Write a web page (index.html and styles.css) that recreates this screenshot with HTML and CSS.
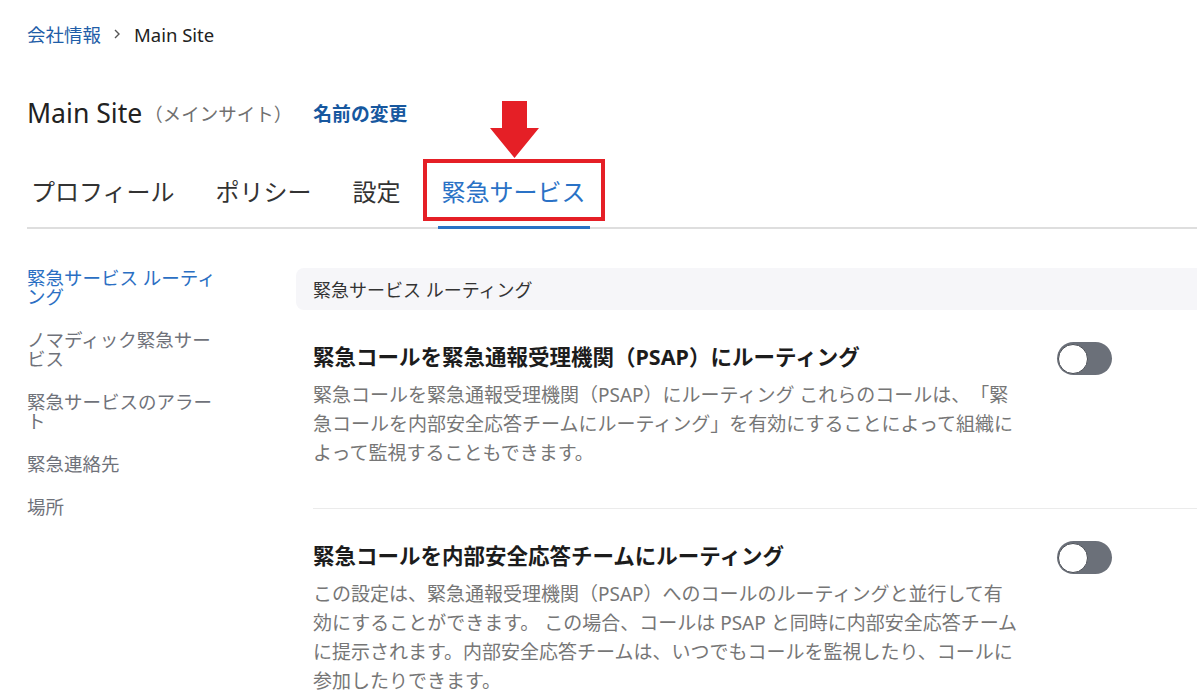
FILE: index.html
```html
<!DOCTYPE html>
<html lang="ja">
<head>
  <meta charset="UTF-8" />
  <meta name="viewport" content="width=device-width, initial-scale=1.0" />
  <title>Main Site - 緊急サービス</title>
  <link rel="stylesheet" href="styles.css">
</head>
<body>
  <div class="page">
    <!-- Breadcrumb -->
    <div class="breadcrumb">
      <a href="#" class="crumb-link">会社情報</a>
      <svg class="crumb-sep" width="8" height="12" viewBox="0 0 8 12"><path d="M2 2 L6 6 L2 10" fill="none" stroke="#555" stroke-width="1.4"/></svg>
      <span class="crumb-current">Main Site</span>
    </div>

    <!-- Title -->
    <div class="site-title">
      <h1>Main Site</h1>
      <span class="site-sub">（メインサイト）</span>
      <a href="#" class="rename">名前の変更</a>
    </div>

    <!-- Tabs -->
    <div class="tabs">
      <div class="tab">プロフィール</div>
      <div class="tab">ポリシー</div>
      <div class="tab">設定</div>
      <div class="tab active">
        緊急サービス
        <svg class="callout-arrow" width="50" height="57" viewBox="0 0 50 57"><path d="M12 0 H37 V27 H49 L24.5 57 L0 27 H12 Z" fill="#e51f26"/></svg>
        <span class="callout-box"></span>
      </div>
    </div>

    <div class="content">
      <!-- Left nav -->
      <ul class="side-nav">
        <li class="active">緊急サービス ルーティング</li>
        <li>ノマディック緊急サービス</li>
        <li>緊急サービスのアラート</li>
        <li>緊急連絡先</li>
        <li>場所</li>
      </ul>

      <!-- Settings -->
      <div class="main">
        <div class="section-head">緊急サービス ルーティング</div>

        <div class="setting">
          <div class="setting-row">
            <h2>緊急コールを緊急通報受理機関（PSAP）にルーティング</h2>
            <span class="toggle"><span class="knob"></span></span>
          </div>
          <p class="desc">緊急コールを緊急通報受理機関（PSAP）にルーティング これらのコールは、「緊急コールを内部安全応答チームにルーティング」を有効にすることによって組織によって監視することもできます。</p>
        </div>

        <div class="setting">
          <div class="setting-row">
            <h2>緊急コールを内部安全応答チームにルーティング</h2>
            <span class="toggle"><span class="knob"></span></span>
          </div>
          <p class="desc">この設定は、緊急通報受理機関（PSAP）へのコールのルーティングと並行して有効にすることができます。 この場合、コールは PSAP と同時に内部安全応答チームに提示されます。内部安全応答チームは、いつでもコールを監視したり、コールに参加したりできます。</p>
        </div>
      </div>
    </div>
  </div>
</body>
</html>
```

FILE: styles.css
```css
body {
  margin: 0;
  font-family: "Noto Sans", "Noto Sans CJK JP", sans-serif;
  color: #222222;
  background: #ffffff;
  overflow: hidden;
}
.page {
  padding: 22px 0 0 27px;
}
a {
  text-decoration: none;
}
.breadcrumb {
  display: flex;
  align-items: center;
  height: 24px;
  font-size: 18.5px;
}
.crumb-link {
  color: #1f5ea8;
}
.crumb-sep {
  margin: 0 13px 0 12px;
}
.crumb-current {
  color: #222222;
}
.site-title {
  display: flex;
  align-items: center;
  height: 36px;
  margin-top: 49px;
}
h1 {
  margin: 0;
  font-size: 26.6px;
  font-weight: 400;
  color: #222222;
}
.site-sub {
  margin-left: 2px;
  font-size: 18.5px;
  color: #707070;
}
.rename {
  margin-left: 21px;
  font-size: 18.8px;
  font-weight: 700;
  color: #17589f;
}
.tabs {
  display: flex;
  gap: 33px;
  margin-top: 45px;
  border-bottom: 2px solid #dedede;
}
.tab {
  position: relative;
  padding: 0 4px 18px;
  margin-bottom: -2px;
  font-size: 24px;
  line-height: 32px;
  color: #333333;
  border-bottom: 3px solid transparent;
}
.tab.active {
  color: #2a72c6;
  border-bottom-color: #2a72c6;
}
.callout-arrow {
  position: absolute;
  left: 52px;
  top: -75px;
}
.callout-box {
  position: absolute;
  left: -15px;
  top: -17px;
  width: 174px;
  height: 54px;
  border: 4px solid #e51f26;
}
.content {
  display: flex;
  margin-top: 39px;
}
.side-nav {
  list-style: none;
  margin: 0;
  padding: 0;
  width: 200px;
  margin-right: 69px;
  flex-shrink: 0;
}
.side-nav li {
  font-size: 18.5px;
  line-height: 19px;
  color: #6f727a;
  margin-bottom: 24px;
}
.side-nav li.active {
  color: #2b6fc3;
}
.main {
  flex: 1;
}
.section-head {
  height: 42px;
  display: flex;
  align-items: center;
  padding-left: 17px;
  font-size: 18px;
  color: #333333;
  background: #f6f6f9;
  border-radius: 8px 0 0 8px;
}
.setting {
  margin-left: 17px;
  padding: 29px 0 40px;
  border-bottom: 1px solid #ebebeb;
}
.setting-row {
  display: flex;
  justify-content: space-between;
  align-items: center;
  padding-right: 85px;
}
h2 {
  margin: 0;
  font-size: 21.5px;
  line-height: 30px;
  font-weight: 700;
  color: #1c1c1c;
}
.toggle {
  position: relative;
  width: 55px;
  height: 33px;
  border-radius: 17px;
  background: #6b7079;
  margin-top: 3px;
}
.knob {
  position: absolute;
  left: 1px;
  top: 2px;
  width: 28px;
  height: 28px;
  border-radius: 50%;
  background: #ffffff;
  border: 1px solid #4a4e55;
}
.desc {
  width: 705px;
  margin: 6px 0 0;
  font-size: 19px;
  line-height: 29px;
  color: #767676;
  text-spacing-trim: space-all;
}
```
